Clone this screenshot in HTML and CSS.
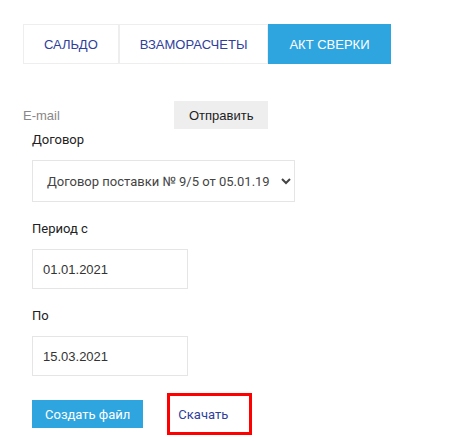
FILE: index.html
```html
<!DOCTYPE html>
<html lang="ru">
<head>
    <meta charset="UTF-8">
    <meta name="viewport" content="width=device-width, initial-scale=1.0">
    <title>Акт сверки</title>
    <link rel="stylesheet" href="styles.css">
</head>
<body>
    <div class="page">
        <nav class="tabs">
            <a class="tab" href="#">САЛЬДО</a>
            <a class="tab" href="#">ВЗАМОРАСЧЕТЫ</a>
            <a class="tab tab-active" href="#">АКТ СВЕРКИ</a>
        </nav>

        <div class="mail-row">
            <span class="mail-label">E-mail</span>
            <button class="btn-send" type="button">Отправить</button>
        </div>

        <form class="act-form">
            <div class="field">
                <label for="contract">Договор</label>
                <select id="contract" class="contract-select">
                    <option>Договор поставки № 9/5 от 05.01.19</option>
                </select>
            </div>
            <div class="field">
                <label for="date-from">Период с</label>
                <input id="date-from" class="date-input" type="text" value="01.01.2021">
            </div>
            <div class="field">
                <label for="date-to">По</label>
                <input id="date-to" class="date-input" type="text" value="15.03.2021">
            </div>
            <div class="actions">
                <button class="btn-create" type="button">Создать файл</button>
                <a class="download" href="#">Скачать</a>
            </div>
        </form>
    </div>
</body>
</html>
```

FILE: styles.css
```css
body, html {
    margin: 0;
    padding: 0;
    background-color: #fff;
    color: #222;
    font-family: 'Liberation Sans', Arial, sans-serif;
}
.page {
    padding: 24px 0 0 23px;
}
.tabs {
    display: flex;
    height: 40px;
}
.tab {
    display: flex;
    align-items: center;
    padding: 0 20px;
    border: 1px solid #eee;
    color: #2f409b;
    font-size: 13px;
    text-decoration: none;
}
.tab-active {
    background-color: #2fa5e0;
    border-color: #2fa5e0;
    color: #fff;
}
.mail-row {
    display: flex;
    align-items: center;
    margin-top: 37px;
    height: 28px;
}
.mail-label {
    width: 151px;
    color: #888;
    font-size: 13px;
}
.btn-send {
    height: 28px;
    padding: 0 15px;
    border: none;
    background-color: #eee;
    color: #222;
    font-family: 'Liberation Sans', Arial, sans-serif;
    font-size: 13px;
    cursor: pointer;
}
.act-form {
    margin-top: 1px;
    padding-left: 9px;
}
.field {
    margin-bottom: 17px;
}
.field label {
    display: block;
    line-height: 20px;
    margin-bottom: 10px;
    font-family: Roboto, sans-serif;
    font-size: 13px;
    color: #222;
}
.contract-select {
    width: 263px;
    height: 42px;
    padding: 0 6px 0 10px;
    border: 1px solid #e5e5e5;
    border-radius: 0;
    background-color: #fff;
    color: #444;
    font-family: Roboto, sans-serif;
    font-size: 13px;
}
.date-input {
    box-sizing: border-box;
    width: 156px;
    height: 40px;
    padding: 0 10px;
    border: 1px solid #e5e5e5;
    color: #333;
    font-family: 'Liberation Sans', Arial, sans-serif;
    font-size: 13px;
}
.actions {
    display: flex;
    align-items: center;
}
.btn-create {
    height: 28px;
    padding: 0 13px;
    border: none;
    background-color: #2fa5e0;
    color: #fff;
    font-family: Roboto, sans-serif;
    font-size: 13px;
    cursor: pointer;
}
.download {
    box-sizing: border-box;
    display: flex;
    align-items: center;
    height: 42px;
    margin-left: 24px;
    padding: 0 21px 0 8px;
    border: 3px solid #f00;
    color: #2f409b;
    font-family: Roboto, sans-serif;
    font-size: 13px;
    text-decoration: none;
}
```
